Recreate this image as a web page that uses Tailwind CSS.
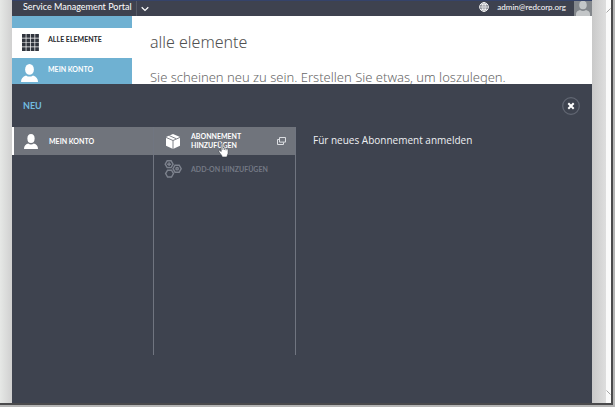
<!doctype html>
<html lang="de">
    <head>
        <meta charset="UTF-8">
        <meta name="viewport" content="width=device-width, initial-scale=1.0">
        <title>Service Management Portal</title>
        <script src="https://cdn.jsdelivr.net/npm/@tailwindcss/browser@4"></script>
    </head>

    <body class="h-screen overflow-hidden bg-[#b5b5b5] font-['Lato','Open_Sans',sans-serif]">
        <div class="flex h-full flex-col pr-[2px] pb-[2px]">
            <div class="flex min-h-0 grow border-r-2 border-b-2 border-[#4a4a4c]">
                <div class="w-3 shrink-0 bg-linear-to-r from-[#e6e8e6] to-[#d0d0d0]"></div>

                <div class="flex min-w-0 grow flex-col bg-[#3e434f]">
                    <!-- top bar -->
                    <header class="flex h-4 shrink-0 items-center overflow-hidden border-t border-[#35436a] bg-[#3e424f] pl-[11px] text-white">
                        <a href="#" class="-mt-1 text-[9px] leading-4 whitespace-nowrap">Service Management Portal</a>
                        <div class="ml-1 h-4 w-px bg-[#555a66]"></div>
                        <button type="button" aria-label="Menü" class="ml-1">
                            <svg class="h-2 w-2" viewBox="0 0 8 8" fill="none" stroke="#fff" stroke-width="1.2"><path d="M.7 2.3 4 5.5 7.3 2.3"/></svg>
                        </button>
                        <div class="grow"></div>
                        <button type="button" aria-label="Sprache" class="mr-2 -mt-1">
                            <svg class="h-[10px] w-[10px]" viewBox="0 0 10 10" fill="none" stroke="#fff" stroke-width=".9"><circle cx="5" cy="5" r="4.4"/><ellipse cx="5" cy="5" rx="2" ry="4.4"/><path d="M5 .6v8.8M.6 5h8.8M1.2 2.8h7.6M1.2 7.2h7.6"/></svg>
                        </button>
                        <a href="#" class="mr-2 -mt-1 text-[8px] leading-4">admin@redcorp.org</a>
                        <div class="h-4 w-[18px] bg-[#83878c]">
                            <svg class="h-4 w-[18px]" viewBox="0 0 18 16" fill="#c3c6c8"><ellipse cx="9" cy="4" rx="3.8" ry="4.2"/><path d="M2 16v-3q0-3 4-4 3 2 6 0 4 1 4 4v3z"/></svg>
                        </div>
                    </header>

                    <!-- page behind the drawer -->
                    <div class="flex h-[68px] shrink-0 overflow-hidden bg-white">
                        <nav class="w-[120px] shrink-0 bg-[#6fb1d2] pt-3 text-[7px] leading-[10px] font-bold">
                            <a href="#" class="flex h-[30px] items-start bg-white pt-[6px] pl-[10px] text-[#26282d]">
                                <svg class="mr-[9px] h-[17px] w-[17px] shrink-0" viewBox="0 0 17 17" fill="none" stroke="#30343d" stroke-width="3.7" stroke-dasharray="3.7 .7"><path d="M0 1.9h17M0 6.3h17M0 10.7h17M0 15.1h17"/></svg>
                                ALLE ELEMENTE
                            </a>
                            <a href="#" class="flex h-[30px] items-start pt-[6px] pl-[9px] text-white">
                                <svg class="mr-[10px] h-[18px] w-[17px] shrink-0" viewBox="0 0 17 18" fill="#fff"><ellipse cx="8.5" cy="5.4" rx="4.4" ry="5.4"/><path d="M0 18q0-5 5-6.6 3.5 2.4 7 0Q17 13 17 18z"/></svg>
                                MEIN KONTO
                            </a>
                        </nav>
                        <main class="min-w-0 grow pt-[14px] pl-[18px] font-['Noto_Sans','Open_Sans',sans-serif] font-light whitespace-nowrap">
                            <h1 class="text-[16px] leading-6 text-[#505050]">alle elemente</h1>
                            <p class="mt-[13px] text-[13px] leading-5 text-[#686868]">Sie scheinen neu zu sein. Erstellen Sie etwas, um loszulegen.</p>
                        </main>
                    </div>

                    <!-- drawer -->
                    <section class="flex min-h-0 grow flex-col">
                        <div class="flex h-[43px] shrink-0 items-center pr-3 pl-[11px]">
                            <h2 class="grow text-[9px] leading-4 font-bold text-[#72bce0]">NEU</h2>
                            <button type="button" aria-label="Schließen">
                                <svg class="h-[18px] w-[18px]" viewBox="0 0 18 18" fill="none"><circle cx="9" cy="9" r="8.3" stroke="#626773" stroke-width="1.2"/><path d="m6.3 6.3 5.4 5.4m0-5.4-5.4 5.4" stroke="#fff" stroke-width="2"/></svg>
                            </button>
                        </div>
                        <div class="mb-12 flex min-h-0 grow text-[7px] leading-[9px] font-bold">
                            <div class="w-[142px] shrink-0 border-r border-[#707580]">
                                <button type="button" class="flex h-7 w-full items-center border-l-2 border-white bg-[#70747c] pl-[10px] text-left text-white">
                                    <svg class="mr-[11px] h-[15px] w-[14px] shrink-0" viewBox="0 0 17 18" preserveAspectRatio="none" fill="#fff"><ellipse cx="8.5" cy="5.4" rx="4.4" ry="5.4"/><path d="M0 18q0-5 5-6.6 3.5 2.4 7 0Q17 13 17 18z"/></svg>
                                    MEIN KONTO
                                </button>
                            </div>
                            <div class="w-[142px] shrink-0 border-r border-[#707580]">
                                <button type="button" class="relative flex h-7 w-full items-center bg-[#70747c] pr-[9px] pl-3 text-left text-white">
                                    <svg class="mr-[11px] h-[15px] w-[14px] shrink-0" viewBox="0 0 14 15"><path d="M7 0 14 3v8.7L7 15 0 11.7V3z" fill="#fff"/><path d="M0 3.4 7 6.5l7-3.1M7 6.5V15M3.2 1.6l7 3.1" fill="none" stroke="#70747c" stroke-width=".9"/></svg>
                                    <span class="grow">ABONNEMENT HINZUFÜGEN</span>
                                    <svg class="ml-8 h-2 w-[9px] shrink-0" viewBox="0 0 9 8" fill="none" stroke="#dcdee2"><path d="M2.5.5h6v4.6h-6zM2.5 2.5h-2v5h6V5.3"/></svg>
                                    <!-- pointer -->
                                    <svg class="absolute top-4 left-16 h-[15px] w-[11px]" viewBox="0 0 11 15" fill="#fff" stroke="#333740" stroke-width=".6"><path d="M3.2 1q1-.9 1.7.2v3.6q.8-.6 1.5.3.9-.5 1.5.4 1.8-.3 2.2 1.4v3.4L8.8 14H4.2L3.6 12.3 1 9Q.2 7.4 1.7 7.2l1.5 1.4z"/><path d="M4.9 5v2M6.5 5.5V7M8.1 6v1.4"/></svg>
                                </button>
                                <button type="button" disabled class="flex h-7 w-full items-center pl-[10px] text-left text-[#747985]">
                                    <svg class="mr-[9px] h-[18px] w-[18px] shrink-0" viewBox="0 0 18 18" fill="none" stroke="#7d828d" stroke-width="1.4"><path d="M3.2.8h3.9l2 3.4-2 3.4H3.2l-2-3.4zM3.6 10.2h3.9l2 3.4-2 3.4H3.6l-2-3.4zM11 5.2h4.2l2 3.5-2 3.5H11L9 8.7z"/><path d="M5.1 2.2v4M3.1 4.2h4" stroke-width="1.5"/><circle cx="13.1" cy="8.7" r="1.2"/></svg>
                                    ADD-ON HINZUFÜGEN
                                </button>
                            </div>
                            <p class="pt-[5px] pl-[17px] font-['Open_Sans',sans-serif] text-[10px] leading-4 font-normal text-[#eef0f3]">Für neues Abonnement anmelden</p>
                        </div>
                    </section>
                </div>

                <div class="w-[14px] shrink-0 bg-linear-to-r from-[#c9c9c9] to-[#dedede]"></div>
                <!-- scroll track -->
                <div class="flex w-[5px] shrink-0 flex-col justify-between bg-[#fafafa] pt-2 pb-2">
                    <svg class="h-[5px] w-[5px]" viewBox="0 0 5 5" fill="none" stroke="#a5a5a5"><path d="M.5 4.5 4.5.5"/></svg>
                    <svg class="h-[5px] w-[5px]" viewBox="0 0 5 5" fill="none" stroke="#a5a5a5"><path d="m.5.5 4 4"/></svg>
                </div>
            </div>
        </div>
    </body>
</html>
